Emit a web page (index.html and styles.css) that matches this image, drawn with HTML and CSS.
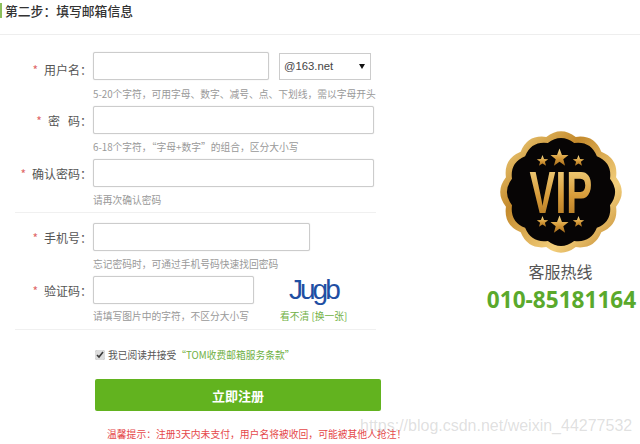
FILE: index.html
```html
<!DOCTYPE html>
<html>
    <head>
        <meta charset="utf-8">
        <title>第二步：填写邮箱信息</title>
        <link rel="stylesheet" href="styles.css">
    </head>
    <body>
        <div class="page">
            <div class="title-bar">
                <h2 class="step-title">第二步：填写邮箱信息</h2>
            </div>

            <div class="main">
                <!-- form column -->
                <form class="reg-form">
                    <div class="form-group">
                        <div class="row">
                            <label class="field-label label-low"><span class="star">*</span>用户名：</label>
                            <div class="field">
                                <input class="text-input input-user" type="text">
                                <div class="select-wrap">
                                    <select class="mail-select"><option>@163.net</option></select>
                                </div>
                            </div>
                        </div>
                        <p class="hint hint-first">5-20个字符，可用字母、数字、减号、点、下划线，需以字母开头</p>
                        <div class="row">
                            <label class="field-label"><span class="star">*</span>密&nbsp;&nbsp;&nbsp;码：</label>
                            <div class="field">
                                <input class="text-input input-full" type="password">
                            </div>
                        </div>
                        <p class="hint hint-short">6-18个字符，“字母+数字”的组合，区分大小写</p>
                        <div class="row">
                            <label class="field-label"><span class="star">*</span>确认密码：</label>
                            <div class="field">
                                <input class="text-input input-full" type="password">
                            </div>
                        </div>
                        <p class="hint hint-short">请再次确认密码</p>
                    </div>

                    <div class="form-group">
                        <div class="row">
                            <label class="field-label"><span class="star">*</span>手机号：</label>
                            <div class="field">
                                <input class="text-input input-phone" type="text">
                            </div>
                        </div>
                        <p class="hint hint-short">忘记密码时，可通过手机号码快速找回密码</p>
                        <div class="row">
                            <label class="field-label"><span class="star">*</span>验证码：</label>
                            <div class="field">
                                <input class="text-input input-code" type="text">
                                <span class="captcha">Jugb</span>
                            </div>
                        </div>
                        <div class="hint-row">
                            <p class="hint hint-code">请填写图片中的字符，不区分大小写</p>
                            <a class="green-link">看不清 [换一张]</a>
                        </div>
                    </div>

                    <div class="agree-row">
                        <input class="agree-check" type="checkbox" checked>
                        <span>我已阅读并接受</span>
                        <a class="green-link terms">“TOM收费邮箱服务条款”</a>
                    </div>
                    <button class="submit-btn" type="button">立即注册</button>
                    <p class="notice">温馨提示：注册3天内未支付，用户名将被收回，可能被其他人抢注！</p>
                </form>

                <!-- vip side column -->
                <div class="side">
                    <svg class="vip-badge" viewBox="-61 -61 122 122" width="122" height="122">
                        <defs>
                            <linearGradient id="goldRing" x1="0" y1="0" x2="1" y2="1">
                                <stop offset="0" stop-color="#f6d98a"/>
                                <stop offset="0.35" stop-color="#c48a2c"/>
                                <stop offset="0.7" stop-color="#f3cf7c"/>
                                <stop offset="1" stop-color="#b97c22"/>
                            </linearGradient>
                            <linearGradient id="goldText" x1="0" y1="0" x2="0" y2="1">
                                <stop offset="0" stop-color="#f7dc8e"/>
                                <stop offset="0.55" stop-color="#d79c3a"/>
                                <stop offset="1" stop-color="#a86e1c"/>
                            </linearGradient>
                            <path id="scallop" d="M14.75 -55.06Q33.25 -57.6 40.3 -40.3Q57.6 -33.25 55.06 -14.75Q66.5 0 55.06 14.75Q57.6 33.25 40.3 40.3Q33.25 57.6 14.75 55.06Q0 66.5 -14.75 55.06Q-33.25 57.6 -40.3 40.3Q-57.6 33.25 -55.06 14.75Q-66.5 0 -55.06 -14.75Q-57.6 -33.25 -40.3 -40.3Q-33.25 -57.6 -14.75 -55.06Q0 -66.5 14.75 -55.06Z"/>
                            <polygon id="star" points="0,-10 2.6,-3.2 9.5,-3.1 4,1.2 5.9,8.1 0,4 -5.9,8.1 -4,1.2 -9.5,-3.1 -2.6,-3.2"/>
                        </defs>
                        <use href="#scallop" fill="url(#goldRing)"/>
                        <use href="#scallop" fill="#070505" transform="scale(0.89)"/>
                        <g fill="url(#goldText)">
                            <use href="#star" transform="translate(-1.5 -34) scale(0.95)"/>
                            <use href="#star" transform="translate(-18.5 -31) scale(0.6)"/>
                            <use href="#star" transform="translate(17.5 -31) scale(0.6)"/>
                            <use href="#star" transform="translate(-1.5 33) scale(0.95)"/>
                            <use href="#star" transform="translate(-18.5 30) scale(0.6)"/>
                            <use href="#star" transform="translate(17.5 30) scale(0.6)"/>
                        </g>
                        <text class="vip-text" transform="translate(-31.5 21) scale(0.65 1)" fill="url(#goldText)">VIP</text>
                    </svg>
                    <div class="hotline-label">客服热线</div>
                    <div class="hotline-number">010-85181164</div>
                </div>
            </div>

            <div class="watermark">https://blog.csdn.net/weixin_44277532</div>
        </div>
    </body>
</html>
```

FILE: styles.css
```css
body {
    margin: 0;
    background-color: #ffffff;
    font-family: "Noto Sans CJK SC", "Liberation Sans", sans-serif;
}

.page {
    position: relative;
    width: 640px;
    height: 444px;
    overflow: hidden;
}

.title-bar {
    height: 35px;
    border-bottom: 1px solid #eeeeee;
    box-sizing: border-box;
    padding-top: 3px;
}
.step-title {
    margin: 0;
    height: 15px;
    line-height: 15px;
    padding-left: 3px;
    border-left: 2px solid #8cbf5c;
    font-size: 12.8px;
    font-weight: 500;
    color: #333333;
}

.main {
    display: flex;
}

.reg-form {
    width: 400px;
    padding-top: 17px;
    padding-left: 15px;
    box-sizing: border-box;
}

.form-group {
    width: 361px;
    border-bottom: 1px solid #f0f0f0;
    margin-bottom: 10px;
}

.row {
    display: flex;
    height: 28px;
    align-items: center;
    gap: 1px;
}
.field-label {
    width: 77px;
    text-align: right;
    font-size: 12px;
    color: #555555;
    white-space: nowrap;
}
.label-low {
    padding-top: 6px;
}
.star {
    color: #e0686a;
    margin-right: 6px;
}
.field {
    display: flex;
    align-items: center;
}

.text-input {
    height: 28px;
    box-sizing: border-box;
    border: 1px solid #cccccc;
    border-radius: 2px;
    box-shadow: 0 0 1px #cccccc;
    background-color: #ffffff;
    padding: 0;
}
.input-user { width: 176px; }
.input-full { width: 281px; }
.input-phone { width: 217px; }
.input-code { width: 161px; }

.select-wrap {
    position: relative;
    margin-left: 10px;
    height: 27px;
}
.select-wrap::after {
    content: "";
    position: absolute;
    right: 6px;
    top: 11px;
    border-left: 3px solid transparent;
    border-right: 3px solid transparent;
    border-top: 5px solid #111111;
}
.mail-select {
    display: block;
    appearance: none;
    width: 92px;
    height: 27px;
    padding: 0 0 0 4px;
    border: 1px solid #cccccc;
    border-radius: 0;
    background-color: #ffffff;
    font-family: "Liberation Sans", sans-serif;
    font-size: 11.3px;
    color: #444444;
}

.captcha {
    width: 84px;
    margin-left: 35px;
    font-family: "Liberation Sans", sans-serif;
    font-size: 28px;
    line-height: 28px;
    letter-spacing: -3px;
    color: #1f4fa3;
}

.hint {
    margin: 0 0 0 78px;
    height: 26px;
    line-height: 26px;
    font-size: 9.75px;
    color: #999999;
    white-space: nowrap;
}
.hint-first {
    line-height: 28px;
}
.hint-short {
    height: 25px;
}
.hint-row {
    display: flex;
    height: 25px;
}
.hint-code {
    width: 187px;
    height: 25px;
    line-height: 25px;
}
.green-link {
    font-size: 9.75px;
    line-height: 25px;
    color: #6fb044;
}

.agree-row {
    display: flex;
    align-items: center;
    height: 16px;
    margin: 17px 0 0 80px;
    font-size: 9.75px;
    color: #555555;
}
.agree-check {
    width: 10px;
    height: 10px;
    margin: 0 3px 0 0;
    accent-color: #dddddd;
}
.terms {
    margin-left: 0;
}

.submit-btn {
    display: block;
    width: 286px;
    height: 32px;
    margin: 16px 0 0 80px;
    border: none;
    border-radius: 2px;
    background-color: #62b31f;
    color: #ffffff;
    font-family: "Noto Sans CJK SC", sans-serif;
    font-size: 13px;
    font-weight: 700;
}

.notice {
    margin: 15px 0 0 92px;
    font-size: 9.8px;
    line-height: 16px;
    color: #e5484a;
    white-space: nowrap;
}

.side {
    display: flex;
    flex-direction: column;
    align-items: center;
    width: 160px;
    margin-left: 81px;
    padding-top: 96px;
}
.vip-badge {
    display: block;
}
.vip-text {
    font-family: "Liberation Sans", sans-serif;
    font-size: 60px;
    font-weight: 700;
}
.hotline-label {
    margin-top: 7px;
    font-size: 16px;
    line-height: 22px;
    color: #555555;
}
.hotline-number {
    margin-top: 3px;
    padding-left: 2px;
    font-family: "Open Sans", sans-serif;
    font-size: 22.6px;
    font-weight: 700;
    line-height: 30px;
    color: #5aa92c;
    white-space: nowrap;
}

.watermark {
    position: absolute;
    left: 360px;
    top: 416px;
    font-family: "Liberation Sans", sans-serif;
    font-size: 16px;
    line-height: 20px;
    color: rgba(150, 150, 150, 0.3);
    white-space: nowrap;
}
```
